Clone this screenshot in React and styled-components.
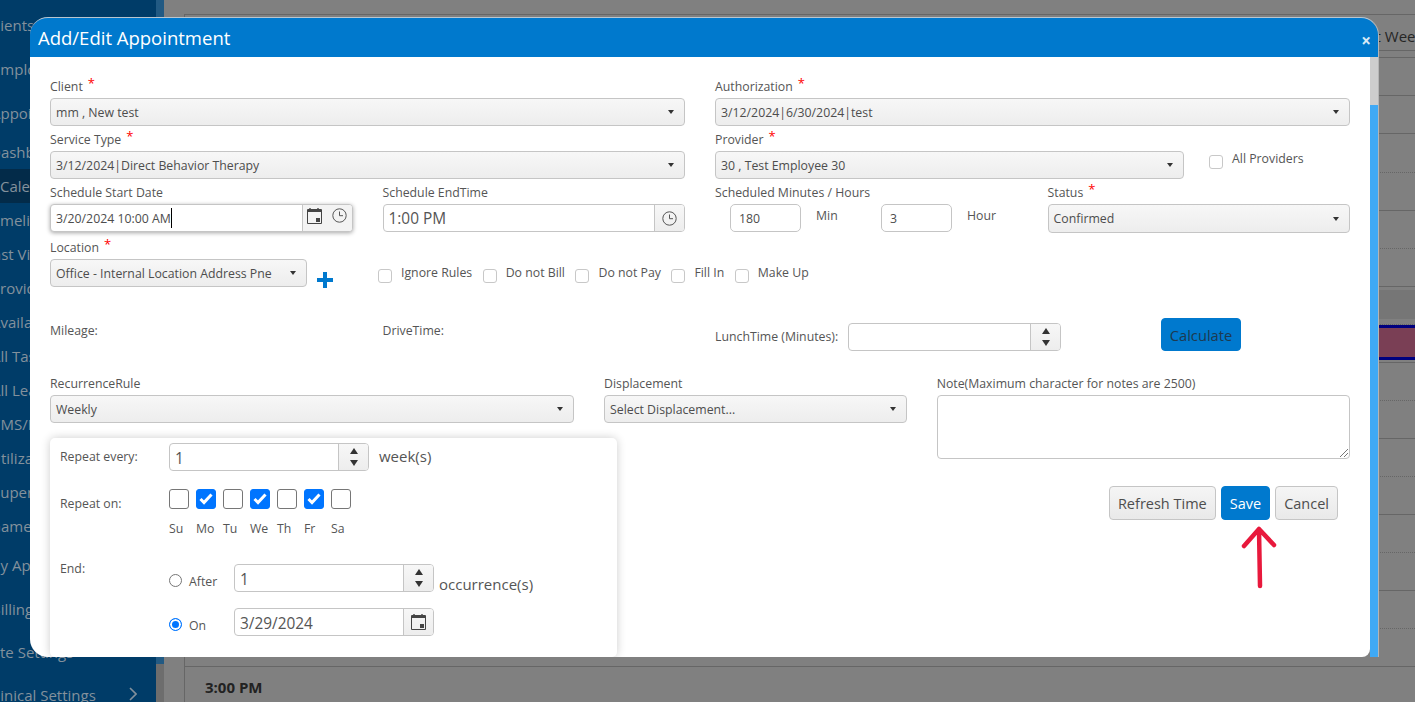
import React from 'react'
import styled, { createGlobalStyle } from 'styled-components'

const GlobalStyle = createGlobalStyle`
    html, body {
        margin: 0;
        padding: 0;
        height: 100%;
        overflow: hidden;
        font-family: "Open Sans", "Noto Sans", sans-serif;
    }
    * {
        box-sizing: border-box;
    }
`

// gap = space above the item, shift = how far the sidebar text is scrolled off to the left
const menu = [
    { label: 'Clients', gap: 8, shift: -13 },
    { label: 'Employees', gap: 10, shift: -8 },
    { label: 'Appointments', gap: 10, shift: -9 },
    { label: 'Dashboard', gap: 5, shift: -10 },
    { label: 'Calendar', gap: 0, shift: 0, active: true },
    { label: 'Timeline', gap: 0, shift: -12 },
    { label: 'Last Visit', gap: 0, shift: -15 },
    { label: 'Providers', gap: 0, shift: -9 },
    { label: 'Availability', gap: 0, shift: -9 },
    { label: 'All Tasks', gap: 0, shift: -9 },
    { label: 'All Leaves', gap: 0, shift: -9 },
    { label: 'CMS/EDI', gap: 0, shift: -9 },
    { label: 'Utilization', gap: 0, shift: -10 },
    { label: 'Supervision', gap: 0, shift: -8 },
    { label: 'Games', gap: 0, shift: -10 },
    { label: 'My Appointments', gap: 5, shift: -13 },
    { label: 'Billing', gap: 10, shift: -9 },
    { label: 'Site Settings', gap: 9, shift: -12 },
    { label: 'Clinical Settings', gap: 9, shift: -13, arrow: true },
]

const slots = [
    { kind: 'first', height: 39 },
    { kind: 'line', height: 38 },
    { kind: 'dots', height: 39 },
    { kind: 'line', height: 38 },
    { kind: 'dots', height: 38 },
    { kind: 'line', height: 38 },
    { kind: 'band', height: 38 },
    { kind: 'event', height: 35 },
    { kind: 'line', height: 3 },
    { kind: 'dots', height: 38 },
    { kind: 'line', height: 38 },
    { kind: 'dots', height: 38 },
    { kind: 'line', height: 38 },
    { kind: 'dots', height: 38 },
    { kind: 'line', height: 38 },
    { kind: 'dots', height: 38 },
    { kind: 'line', height: 38 },
]

const days = [
    { label: 'Su', on: false },
    { label: 'Mo', on: true },
    { label: 'Tu', on: false },
    { label: 'We', on: true },
    { label: 'Th', on: false },
    { label: 'Fr', on: true },
    { label: 'Sa', on: false },
]

const CalendarIcon = () => (
    <svg width="15" height="16" viewBox="0 0 15 16">
        <path d="M3 0v3M11 0v3" stroke="#444" strokeWidth="1.4" />
        <path d="M.5 1.5h14v14H.5z" fill="none" stroke="#444" />
        <path d="M0 2h15v2H0z" fill="#444" />
        <path d="M9 10h4v4H9z" fill="#444" />
    </svg>
)

const ClockIcon = () => (
    <svg width="15" height="15" viewBox="0 0 15 15">
        <circle cx="7.5" cy="7.5" r="6.7" fill="none" stroke="#555" strokeWidth="1" />
        <path d="M7.5 3.5v4.2h3.5" fill="none" stroke="#555" strokeWidth="1" />
    </svg>
)

const Arrow = () => (
    <svg width="6" height="4" viewBox="0 0 6 4">
        <path d="M0 0h6L3 4z" fill="#333" />
    </svg>
)

const Spinner = () => (
    <SpinButton>
        <svg width="8" height="6" viewBox="0 0 8 6"><path d="M0 6h8L4 0z" fill="#333" /></svg>
        <svg width="8" height="6" viewBox="0 0 8 6"><path d="M0 0h8L4 6z" fill="#333" /></svg>
    </SpinButton>
)

const Select = ({ value, tall }) => (
    <SelectBox $tall={tall}>
        <span>{value}</span>
        <Arrow />
    </SelectBox>
)

const Field = ({ label, required, children }) => (
    <div>
        <Label>
            {label}
            {required && <Star>*</Star>}
        </Label>
        {children}
    </div>
)

const Check = ({ label }) => (
    <CheckItem>
        <CheckBox />
        <CheckText>{label}</CheckText>
    </CheckItem>
)

const App = () => {
    return (
        <>
            <GlobalStyle />
            <Page>
                <Sidebar>
                    <SideScroll />
                    {menu.map(item => (
                        <MenuItem key={item.label} $gap={item.gap} $shift={item.shift} $active={item.active}>
                            {item.label}
                            {item.arrow && (
                                <MenuArrow viewBox="0 0 8 14">
                                    <path d="M1 1l6 6-6 6" fill="none" stroke="#83919c" strokeWidth="1.6" />
                                </MenuArrow>
                            )}
                        </MenuItem>
                    ))}
                </Sidebar>

                <Main>
                    <Board>
                        <BoardBar>
                            <BoardView>Next Week</BoardView>
                        </BoardBar>
                        {slots.map((slot, i) => (
                            <Slot key={i} $kind={slot.kind} $height={slot.height} />
                        ))}
                        <TimeRow>3:00 PM</TimeRow>
                    </Board>
                </Main>

                <Modal>
                    <ModalHeader>
                        <ModalTitle>Add/Edit Appointment</ModalTitle>
                        <CloseButton>×</CloseButton>
                    </ModalHeader>
                    <ModalBody>
                        <Content>
                            <Row>
                                <Col $span={6}>
                                    <Field label="Client" required>
                                        <Select value="mm , New test" />
                                    </Field>
                                </Col>
                                <Col $span={6}>
                                    <Field label="Authorization" required>
                                        <Select value="3/12/2024|6/30/2024|test" />
                                    </Field>
                                </Col>
                            </Row>
                            <Row>
                                <Col $span={6}>
                                    <Field label="Service Type" required>
                                        <Select value="3/12/2024|Direct Behavior Therapy" />
                                    </Field>
                                </Col>
                                <Col $span={6}>
                                    <ProviderLine>
                                        <Field label="Provider" required>
                                            <Select value="30 , Test Employee 30" />
                                        </Field>
                                        <AllProviders>
                                            <CheckBox />
                                            <CheckText>All Providers</CheckText>
                                        </AllProviders>
                                    </ProviderLine>
                                </Col>
                            </Row>
                            <Row>
                                <Col $span={3}>
                                    <Field label="Schedule Start Date">
                                        <PickerBox $focused>
                                            <SmallValue>3/20/2024 10:00 AM<Caret /></SmallValue>
                                            <PickerIcons>
                                                <CalendarIcon />
                                                <ClockIcon />
                                            </PickerIcons>
                                        </PickerBox>
                                    </Field>
                                </Col>
                                <Col $span={3}>
                                    <Field label="Schedule EndTime">
                                        <PickerBox>
                                            <BigValue>1:00 PM</BigValue>
                                            <AddOn $width={30}><ClockIcon /></AddOn>
                                        </PickerBox>
                                    </Field>
                                </Col>
                                <Col $span={3}>
                                    <Field label="Scheduled Minutes / Hours">
                                        <MinutesLine>
                                            <SmallInput>180</SmallInput>
                                            <UnitText $width={65}>Min</UnitText>
                                            <SmallInput>3</SmallInput>
                                            <UnitText $width={36}>Hour</UnitText>
                                        </MinutesLine>
                                    </Field>
                                </Col>
                                <Col $span={3}>
                                    <Field label="Status" required>
                                        <Select value="Confirmed" tall />
                                    </Field>
                                </Col>
                            </Row>
                            <LocationLine>
                                <LocationField>
                                    <Field label="Location" required>
                                        <Select value="Office - Internal Location Address Pne" />
                                    </Field>
                                </LocationField>
                                <PlusIcon viewBox="0 0 16 16">
                                    <path d="M6 0h4v6h6v4h-6v6H6v-6H0V6h6z" fill="#0079ce" />
                                </PlusIcon>
                                <CheckGroup>
                                    <Check label="Ignore Rules" />
                                    <Check label="Do not Bill" />
                                    <Check label="Do not Pay" />
                                    <Check label="Fill In" />
                                    <Check label="Make Up" />
                                </CheckGroup>
                            </LocationLine>
                            <CalcRow>
                                <Col $span={3}><PlainText>Mileage:</PlainText></Col>
                                <Col $span={3}><PlainText>DriveTime:</PlainText></Col>
                                <Col $span={6}>
                                    <LunchLine>
                                        <LunchLabel>LunchTime (Minutes):</LunchLabel>
                                        <LunchBox $width={213}>
                                            <BigValue />
                                            <Spinner />
                                        </LunchBox>
                                        <CalcButton>Calculate</CalcButton>
                                    </LunchLine>
                                </Col>
                            </CalcRow>
                            <Row>
                                <Col $span={8}>
                                    <RuleLine>
                                        <Field label="RecurrenceRule">
                                            <Select value="Weekly" />
                                        </Field>
                                        <Field label="Displacement">
                                            <Select value="Select Displacement..." />
                                        </Field>
                                    </RuleLine>
                                    <RepeatCard>
                                        <RepeatRow>
                                            <RepeatLabel>Repeat every:</RepeatLabel>
                                            <InlineLine>
                                                <NumberBox $width={200}>
                                                    <BigValue>1</BigValue>
                                                    <Spinner />
                                                </NumberBox>
                                                <UnitLabel>week(s)</UnitLabel>
                                            </InlineLine>
                                        </RepeatRow>
                                        <DaysRow>
                                            <RepeatLabel $top={1}>Repeat on:</RepeatLabel>
                                            <DayGrid>
                                                {days.map(day => (
                                                    <DayBox key={day.label} $on={day.on}>
                                                        {day.on && (
                                                            <svg width="14" height="12" viewBox="0 0 14 12">
                                                                <path d="M1.5 6 5 9.5l7.5-8" fill="none" stroke="#fff" strokeWidth="3" />
                                                            </svg>
                                                        )}
                                                    </DayBox>
                                                ))}
                                                {days.map(day => (
                                                    <DayName key={day.label}>{day.label}</DayName>
                                                ))}
                                            </DayGrid>
                                        </DaysRow>
                                        <EndRow>
                                            <RepeatLabel $top={-3}>End:</RepeatLabel>
                                            <EndOptions>
                                                <EndLine>
                                                    <Radio />
                                                    <RadioText>After</RadioText>
                                                    <NumberBox $width={200}>
                                                        <BigValue>1</BigValue>
                                                        <Spinner />
                                                    </NumberBox>
                                                    <UnitLabel $down={7} $gap={5}>occurrence(s)</UnitLabel>
                                                </EndLine>
                                                <EndLine>
                                                    <Radio $on />
                                                    <RadioText>On</RadioText>
                                                    <NumberBox $width={200}>
                                                        <BigValue>3/29/2024</BigValue>
                                                        <AddOn $width={30}><CalendarIcon /></AddOn>
                                                    </NumberBox>
                                                </EndLine>
                                            </EndOptions>
                                        </EndRow>
                                    </RepeatCard>
                                </Col>
                                <Col $span={4}>
                                    <Field label="Note(Maximum character for notes are 2500)">
                                        <NoteBox>
                                            <svg width="9" height="9" viewBox="0 0 9 9">
                                                <path d="M9 1 1 9M9 5 5 9" stroke="#777" />
                                            </svg>
                                        </NoteBox>
                                    </Field>
                                    <ButtonLine>
                                        <Button>Refresh Time</Button>
                                        <Button $primary>Save</Button>
                                        <Button>Cancel</Button>
                                    </ButtonLine>
                                </Col>
                            </Row>
                        </Content>
                        <ScrollBar>
                            <ScrollThumb />
                        </ScrollBar>
                    </ModalBody>
                </Modal>

                <RedArrow viewBox="0 0 36 64">
                    <path d="M18 3 19 60M3 20 18 3 33 19" fill="none" stroke="#e8193c" strokeWidth="4.5" strokeLinecap="round" strokeLinejoin="round" />
                </RedArrow>
            </Page>
        </>
    )
}

const Page = styled.div`
    position: relative;
    display: flex;
    width: 1415px;
    height: 702px;
    overflow: hidden;
    background: #808080;
`

const Sidebar = styled.nav`
    position: relative;
    flex: 0 0 164px;
    height: 100%;
    background: linear-gradient(to right, #003c68 156px, #6d6d6d 156px);
    overflow: hidden;
`

const SideScroll = styled.div`
    position: absolute;
    top: 0;
    left: 156px;
    width: 8px;
    height: 664px;
    background: #225a83;
`

const MenuItem = styled.div`
    position: relative;
    width: 156px;
    height: 34px;
    margin-top: ${props => props.$gap}px;
    text-indent: ${props => props.$shift}px;
    font-size: 15px;
    line-height: 34px;
    white-space: nowrap;
    color: #83919c;
    background: ${props => props.$active ? '#032b49' : 'transparent'};
`

const MenuArrow = styled.svg`
    position: absolute;
    left: 129px;
    top: 9px;
    width: 8px;
    height: 14px;
`

const Main = styled.main`
    flex: 1;
    padding: 14px 0 0 20px;
    height: 100%;
`

const Board = styled.section`
    border-left: 1px solid #666;
    border-top: 1px solid #666;
    height: 100%;
`

const BoardBar = styled.div`
    height: 36px;
    margin-bottom: 6px;
    border-bottom: 1px solid #666;
    font-size: 15px;
    line-height: 42px;
    white-space: nowrap;
`

const BoardView = styled.span`
    margin-left: 1163px;
    color: #262626;
`

const Slot = styled.div`
    height: ${props => props.$height}px;
    border-bottom: 1px ${props => props.$kind === 'dots' || props.$kind === 'band' ? 'dotted' : 'solid'} #666;
    ${props => props.$kind === 'first' && 'border-top: 1px solid #666;'}
    ${props => props.$kind === 'band' && 'background: linear-gradient(transparent 3px, #767676 3px, #767676 32px, transparent 32px);'}
    ${props => props.$kind === 'event' && 'background: #7a3f55; border-top: 3px solid #00007f; border-bottom: 3px solid #00007f;'}
`

const TimeRow = styled.div`
    padding-left: 20px;
    font-size: 15px;
    line-height: 40px;
    font-weight: 700;
    color: #222;
`

const Modal = styled.div`
    position: absolute;
    left: 30px;
    top: 17px;
    width: 1349px;
    height: 640px;
    display: flex;
    flex-direction: column;
    border-radius: 18px 18px 0 0;
`

const ModalHeader = styled.header`
    display: flex;
    align-items: center;
    justify-content: space-between;
    flex: 0 0 40px;
    padding: 0 7px 0 8px;
    background: #0079cd;
    border-top: 1px solid #b9c6d0;
    border-right: 1px solid #b5b5b5;
    border-radius: 18px 18px 0 0;
`

const ModalTitle = styled.h1`
    margin: 0;
    font-size: 18.5px;
    font-weight: 400;
    color: #fff;
`

const CloseButton = styled.span`
    margin-top: 5px;
    font-size: 17px;
    font-weight: 700;
    color: #d8eaf6;
`

const ModalBody = styled.div`
    flex: 1;
    display: flex;
    min-height: 0;
    border-right: 1px solid #b5b5b5;
`

const Content = styled.div`
    flex: 1;
    padding: 16px 20px 0;
    background: #fff;
    border-radius: 0 0 8px 18px;
    overflow: hidden;
`

const ScrollBar = styled.div`
    flex: 0 0 8px;
    background: #3fa9f5;
`

const ScrollThumb = styled.div`
    height: 48px;
    background: #cdcdcd;
`

const Row = styled.div`
    display: grid;
    grid-template-columns: repeat(12, 1fr);
    column-gap: 30px;
`

const Col = styled.div`
    grid-column: span ${props => props.$span};
    min-width: 0;
`

const Label = styled.label`
    display: block;
    height: 25px;
    font-size: 12.3px;
    line-height: 27px;
    color: #555;
    white-space: nowrap;
`

const Star = styled.span`
    position: relative;
    top: -3px;
    margin-left: 5px;
    font-size: 13px;
    line-height: 1;
    color: #f00;
`

const SelectBox = styled.div`
    display: flex;
    align-items: center;
    justify-content: space-between;
    height: ${props => props.$tall ? 29 : 28}px;
    padding: 0 10px 0 5px;
    font-size: 12.3px;
    color: #4d4d4d;
    white-space: nowrap;
    border: 1px solid #c5c5c5;
    border-radius: 4px;
    background: linear-gradient(#f7f7f7, #ededed);
`

const PickerBox = styled.div`
    display: flex;
    align-items: stretch;
    height: 28px;
    border: 1px solid #c5c5c5;
    border-radius: 4px;
    background: #fff;
    overflow: hidden;
    ${props => props.$focused && 'box-shadow: 0 1px 4px rgba(0, 0, 0, 0.35);'}
`

const SmallValue = styled.div`
    flex: 1;
    display: flex;
    align-items: center;
    padding-left: 5px;
    font-size: 12.3px;
    color: #4d4d4d;
`

const Caret = styled.i`
    width: 1px;
    height: 20px;
    background: #000;
`

const BigValue = styled.div`
    flex: 1;
    padding: 3px 5px 0;
    font-size: 15.4px;
    line-height: 21px;
    color: #555;
`

const PickerIcons = styled.div`
    flex: 0 0 50px;
    display: flex;
    align-items: flex-start;
    justify-content: space-around;
    padding-top: 3px;
    border-left: 1px solid #c5c5c5;
    background: #f3f3f3;
`

const AddOn = styled.div`
    flex: 0 0 ${props => props.$width}px;
    display: flex;
    align-items: center;
    justify-content: center;
    border-left: 1px solid #c5c5c5;
    background: linear-gradient(#f7f7f7, #ededed);
`

const SpinButton = styled.div`
    flex: 0 0 30px;
    display: flex;
    flex-direction: column;
    align-items: center;
    justify-content: center;
    gap: 6px;
    border-left: 1px solid #c5c5c5;
    background: linear-gradient(#f7f7f7, #ededed);
`

const NumberBox = styled(PickerBox)`
    flex: 0 0 ${props => props.$width}px;
    width: ${props => props.$width}px;
    ${BigValue} {
        padding-top: 4px;
    }
`

const MinutesLine = styled.div`
    display: flex;
    align-items: flex-start;
    padding-left: 15px;
`

const SmallInput = styled.div`
    width: 71px;
    height: 28px;
    padding-left: 8px;
    font-size: 12.3px;
    line-height: 28px;
    color: #4d4d4d;
    border: 1px solid #c5c5c5;
    border-radius: 5px;
`

const UnitText = styled.span`
    width: ${props => props.$width + 15}px;
    padding-left: 15px;
    font-size: 12.3px;
    line-height: 24px;
    color: #555;
`

const ProviderLine = styled.div`
    display: grid;
    grid-template-columns: 469px 1fr;
`

const AllProviders = styled.div`
    display: flex;
    align-items: flex-start;
    gap: 9px;
    padding: 24px 0 0 25px;
`

const LocationLine = styled.div`
    display: flex;
    align-items: flex-start;
    margin-top: 1px;
`

const LocationField = styled.div`
    width: 257px;
`

const PlusIcon = styled.svg`
    width: 16px;
    height: 16px;
    margin: 38px 0 0 10px;
`

const CheckGroup = styled.div`
    display: flex;
    gap: 10.5px;
    margin: 30px 0 0 45px;
`

const CheckItem = styled.div`
    display: flex;
    align-items: flex-start;
    gap: 9px;
`

const CheckBox = styled.span`
    flex: 0 0 14px;
    width: 14px;
    height: 14px;
    margin-top: 5px;
    border: 1px solid #c8c8c8;
    border-radius: 3px;
    background: #fff;
`

const CheckText = styled.span`
    font-size: 12.3px;
    line-height: 18px;
    color: #555;
    white-space: nowrap;
`

const CalcRow = styled(Row)`
    margin: 30px 0 19px;
`

const PlainText = styled.div`
    font-size: 12.3px;
    line-height: 25px;
    color: #555;
`

const LunchLine = styled.div`
    display: flex;
    align-items: flex-start;
    height: 33px;
`

const LunchLabel = styled.span`
    width: 133px;
    padding-top: 10px;
    font-size: 12.3px;
    line-height: 17px;
    color: #555;
    white-space: nowrap;
`

const LunchBox = styled(NumberBox)`
    margin-top: 5px;
`

const CalcButton = styled.button`
    width: 80px;
    height: 33px;
    margin-left: 100px;
    padding: 0;
    font-family: inherit;
    font-size: 14.7px;
    color: #1d3a50;
    background: #0079ce;
    border: 1px solid #0079ce;
    border-radius: 4px;
`

const RuleLine = styled.div`
    display: grid;
    grid-template-columns: 524px 303px;
    column-gap: 30px;
`

const RepeatCard = styled.div`
    width: 567px;
    height: 219px;
    margin-top: 15px;
    padding: 5px 0 0 10px;
    background: #fff;
    border-radius: 5px;
    box-shadow: 0 0 10px rgba(0, 0, 0, 0.2);
`

const RepeatRow = styled.div`
    display: grid;
    grid-template-columns: 109px 1fr;
`

const DaysRow = styled(RepeatRow)`
    margin-top: 18px;
`

const EndRow = styled(RepeatRow)`
    margin-top: 18px;
`

const RepeatLabel = styled.div`
    font-size: 12.3px;
    line-height: 28px;
    color: #555;
    margin-top: ${props => props.$top || 0}px;
`

const InlineLine = styled.div`
    display: flex;
    align-items: flex-start;
`

const UnitLabel = styled.span`
    margin: ${props => props.$down || 0}px 0 0 ${props => props.$gap || 10}px;
    font-size: 15px;
    line-height: 26px;
    color: #555;
    white-space: nowrap;
`

const DayGrid = styled.div`
    display: grid;
    grid-template-columns: repeat(7, 20px);
    column-gap: 7px;
    row-gap: 9px;
`

const DayBox = styled.span`
    display: flex;
    align-items: center;
    justify-content: center;
    width: 20px;
    height: 20px;
    border: 1px solid ${props => props.$on ? '#0075ff' : '#767676'};
    border-radius: 3px;
    background: ${props => props.$on ? '#0075ff' : '#fff'};
`

const DayName = styled.span`
    font-size: 12.3px;
    line-height: 22px;
    color: #555;
`

const EndOptions = styled.div`
    display: flex;
    flex-direction: column;
    gap: 16px;
    padding-top: 6px;
`

const EndLine = styled.div`
    display: flex;
    align-items: flex-start;
    height: 28px;
`

const Radio = styled.span`
    flex: 0 0 13px;
    width: 13px;
    height: 13px;
    margin-top: 10px;
    border-radius: 50%;
    border: ${props => props.$on ? '1px solid #0075ff' : '1px solid #767676'};
    background: ${props => props.$on ? '#0075ff' : '#fff'};
    box-shadow: ${props => props.$on ? 'inset 0 0 0 2px #fff' : 'none'};
`

const RadioText = styled.span`
    flex: 0 0 52px;
    padding: 10px 0 0 7px;
    font-size: 12.3px;
    line-height: 16px;
    color: #555;
`

const NoteBox = styled.div`
    display: flex;
    align-items: flex-end;
    justify-content: flex-end;
    height: 64px;
    padding: 0 1px 1px 0;
    border: 1px solid #c5c5c5;
    border-radius: 4px;
`

const ButtonLine = styled.div`
    display: flex;
    justify-content: flex-end;
    gap: 5px;
    margin-top: 27px;
    padding-right: 12px;
`

const Button = styled.button`
    height: 34px;
    padding: 0 8px;
    font-family: inherit;
    font-size: 14.5px;
    color: ${props => props.$primary ? '#fff' : '#4d4d4d'};
    background: ${props => props.$primary ? '#0079ce' : 'linear-gradient(#f5f5f5, #e9e9e9)'};
    border: 1px solid ${props => props.$primary ? '#0079ce' : '#c5c5c5'};
    border-radius: 4px;
`

const RedArrow = styled.svg`
    position: absolute;
    left: 1241px;
    top: 526px;
    width: 36px;
    height: 64px;
`

export default App
